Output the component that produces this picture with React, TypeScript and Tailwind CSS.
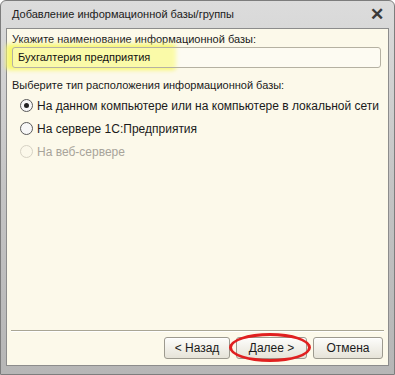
import React from "react";

const font = { fontFamily: '"Liberation Sans", Arial, sans-serif' };

function Radio({ label, checked, disabled }: { label: string; checked?: boolean; disabled?: boolean }) {
  return (
    <div className={`flex items-center h-[23px] gap-[4px] ${disabled ? "text-[#a8a49a]" : "text-[#1a1a1a]"}`}>
      <span
        className={`w-[13px] h-[13px] rounded-full border flex items-center justify-center ${
          disabled ? "border-[#d6d2c4] bg-[#fbf8ea]" : "border-[#5a5a5a] bg-[#f7f7f7]"
        }`}
      >
        {checked && <span className="w-[5px] h-[5px] rounded-full bg-[#222]" />}
      </span>
      <span>{label}</span>
    </div>
  );
}

function Btn({ children }: { children: React.ReactNode }) {
  return (
    <button className="h-[22px] rounded-[3px] border border-[#9d9a8f] bg-gradient-to-b from-[#fdfdfb] to-[#e6e3d8] text-[12px] text-[#1a1a1a] shadow-[inset_0_1px_0_#fff]">
      {children}
    </button>
  );
}

export default function App() {
  return (
    <div className="w-[395px] h-[375px] overflow-hidden bg-white" style={font}>
      <div className="w-full h-full flex flex-col rounded-t-[6px] border border-[#7d7d7d] bg-gradient-to-b from-[#dcdcdc] via-[#c4c4c4] to-[#b6b6b6]">
        {/* title bar */}
        <div className="h-[27px] flex items-center justify-between pl-[11px] pr-[10px]">
          <span className="text-[11px] text-[#202020]">Добавление информационной базы/группы</span>
          <span className="text-[17px] font-bold text-[#3a3a3a] leading-none">✕</span>
        </div>

        {/* body */}
        <div className="flex-1 mx-[5px] mb-[8px] border border-[#8c8c8c] bg-[#fcf9ea] flex flex-col text-[12px]">
          <div className="px-[5px] pt-[2px] flex flex-col">
            <div className="text-[#1a1a1a] h-[16px] leading-[16px] text-[11px]">Укажите наименование информационной базы:</div>
            <div className="relative">
              <div className="absolute left-[-6px] top-[-3px] w-[170px] h-[26px] bg-[#f7f76e] blur-[2px] rounded-[4px]" />
              <div className="relative h-[21px] w-[369px] rounded-[3px] border border-[#b5b1a2] bg-white/40 flex items-center px-[5px] text-[11px] text-[#111]">
                Бухгалтерия предприятия
              </div>
            </div>
            <div className="mt-[9px] h-[16px] leading-[16px] text-[11px] text-[#1a1a1a]">
              Выберите тип расположения информационной базы:
            </div>
            <div className="pl-[8px] pt-[1px] flex flex-col">
              <Radio label="На данном компьютере или на компьютере в локальной сети" checked />
              <Radio label="На сервере 1С:Предприятия" />
              <Radio label="На веб-сервере" disabled />
            </div>
          </div>

          <div className="flex-1" />

          <div className="mx-[4px] border-t border-[#a9a694] border-b border-b-white" />
          <div className="h-[33px] flex items-center justify-end gap-[6px] pr-[5px] pb-[1px]">
            <div className="w-[66px] flex flex-col"><Btn>&lt; Назад</Btn></div>
            <div className="relative w-[71px] flex flex-col">
              <Btn>Далее &gt;</Btn>
              <div className="absolute left-[-7px] top-[-4px] w-[82px] h-[29px] rounded-[50%] border-[3px] border-[#e02020]" />
            </div>
            <div className="w-[70px] flex flex-col"><Btn>Отмена</Btn></div>
          </div>
        </div>
      </div>
    </div>
  );
}
